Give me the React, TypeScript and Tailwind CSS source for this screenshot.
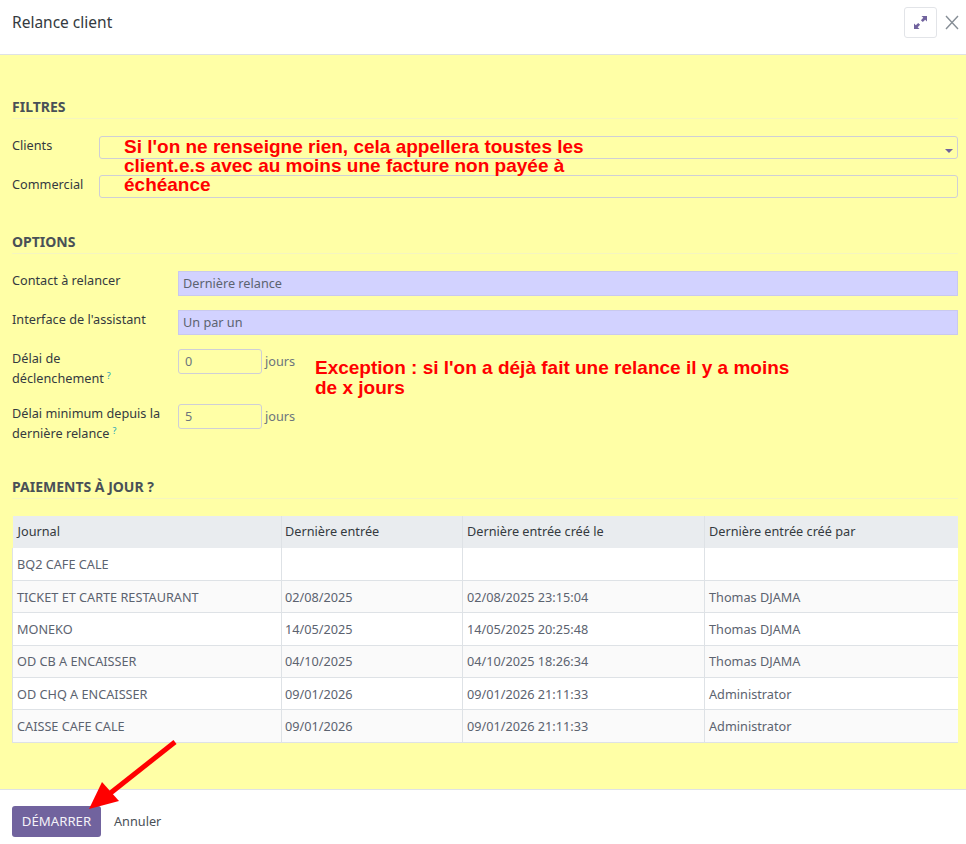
const rows = [
  ["BQ2 CAFE CALE", "", "", ""],
  ["TICKET ET CARTE RESTAURANT", "02/08/2025", "02/08/2025 23:15:04", "Thomas DJAMA"],
  ["MONEKO", "14/05/2025", "14/05/2025 20:25:48", "Thomas DJAMA"],
  ["OD CB A ENCAISSER", "04/10/2025", "04/10/2025 18:26:34", "Thomas DJAMA"],
  ["OD CHQ A ENCAISSER", "09/01/2026", "09/01/2026 21:11:33", "Administrator"],
  ["CAISSE CAFE CALE", "09/01/2026", "09/01/2026 21:11:33", "Administrator"],
];

function SectionTitle({ children }: { children: string }) {
  return (
    <h2 className="h-[23px] border-b border-[#f5f5c0] text-[14px] leading-[21px] font-bold text-[#495057]">
      {children}
    </h2>
  );
}

function Help() {
  return <sup className="ml-[3px] text-[9px] leading-none text-[#17a2b8]">?</sup>;
}

function NumberField({ value }: { value: string }) {
  return (
    <div className="flex items-start">
      <div className="h-[25px] w-[84px] rounded-[3px] border border-[#cfcfd6] pl-[6px] text-[12.7px] leading-[23px] text-[#6c757d]">
        {value}
      </div>
      <span className="ml-[3px] mt-[2px] text-[12.7px] leading-[20px] text-[#6c757d]">jours</span>
    </div>
  );
}

export default function App() {
  return (
    <div className="relative flex h-[844px] w-[966px] flex-col overflow-hidden bg-white font-['Noto_Sans',sans-serif] text-[12.7px] text-[#343a40]">
      <header className="flex h-[55px] shrink-0 items-start border-b border-[#dee2e6] pl-[12px] pr-[7px]">
        <h1 className="mt-[12px] text-[15.5px] leading-[20px] text-[#343a40]">Relance client</h1>
        <button className="ml-auto mt-[7px] grid h-[31px] w-[33px] place-items-center rounded-[3px] border border-[#e2e4e8] bg-white">
          <svg width="15" height="15" viewBox="0 0 15 15" fill="#71639e">
            <path d="M8.5 1H14v5.5l-1.8-1.8-2.4 2.4-1.9-1.9 2.4-2.4z" />
            <path d="M1 8.5V14h5.5l-1.8-1.8 2.4-2.4-1.9-1.9-2.4 2.4z" />
          </svg>
        </button>
        <button className="ml-[8px] mt-[15px]">
          <svg width="14" height="15" viewBox="0 0 14 15" stroke="#868e96" strokeWidth="1.4" fill="none">
            <path d="M1 1l12 13M13 1L1 14" />
          </svg>
        </button>
      </header>

      <main className="flex-1 bg-[#ffffa6] pl-[12px] pr-[8px] pt-[41px]">
        <SectionTitle>FILTRES</SectionTitle>
        <div className="mt-[17px] flex h-[23px] items-start">
          <label className="w-[87px] leading-[19px]">Clients</label>
          <div className="relative h-[23px] flex-1 rounded-[3px] border border-[#cfcfd6]">
            <span className="absolute right-[4px] top-[12px] h-0 w-0 border-x-[4px] border-t-[4px] border-x-transparent border-t-[#71639e]" />
          </div>
        </div>
        <div className="mt-[16px] flex h-[23px] items-start">
          <label className="w-[87px] leading-[19px]">Commercial</label>
          <div className="h-[23px] flex-1 rounded-[3px] border border-[#cfcfd6]" />
        </div>

        <div className="mt-[33px]">
          <SectionTitle>OPTIONS</SectionTitle>
        </div>
        <div className="mt-[17px] flex h-[25px] items-start">
          <label className="w-[166px] leading-[19px]">Contact à relancer</label>
          <div className="h-[25px] flex-1 border border-[#c9c9ee] bg-[#d2d2ff] pl-[4px] leading-[23px] text-[#5c6370]">
            Dernière relance
          </div>
        </div>
        <div className="mt-[14px] flex h-[25px] items-start">
          <label className="w-[166px] leading-[19px]">Interface de l'assistant</label>
          <div className="h-[25px] flex-1 border border-[#c9c9ee] bg-[#d2d2ff] pl-[4px] leading-[23px] text-[#5c6370]">
            Un par un
          </div>
        </div>
        <div className="mt-[14px] flex h-[40px] items-start">
          <label className="-mt-[1px] w-[166px] leading-[20px]">
            Délai de
            <br />
            déclenchement
            <Help />
          </label>
          <NumberField value="0" />
        </div>
        <div className="mt-[15px] flex h-[40px] items-start">
          <label className="-mt-[1px] w-[166px] leading-[20px]">
            Délai minimum depuis la
            <br />
            dernière relance
            <Help />
          </label>
          <NumberField value="5" />
        </div>

        <div className="mt-[32px]">
          <SectionTitle>PAIEMENTS À JOUR ?</SectionTitle>
        </div>
        <table className="mt-[17px] w-[945px] table-fixed border-collapse text-[12.7px] text-[#5c6370]">
          <colgroup>
            <col className="w-[269px]" />
            <col className="w-[181px]" />
            <col className="w-[242px]" />
            <col className="w-[253px]" />
          </colgroup>
          <thead>
            <tr className="h-[32px] bg-[#e9ecef] text-[#343a40]">
              <th className="border-r border-[#dee2e6] pl-[5px] text-left font-normal">Journal</th>
              <th className="border-r border-[#dee2e6] pl-[3px] text-left font-normal">Dernière entrée</th>
              <th className="border-r border-[#dee2e6] pl-[4px] text-left font-normal">Dernière entrée créé le</th>
              <th className="pl-[4px] text-left font-normal">Dernière entrée créé par</th>
            </tr>
          </thead>
          <tbody>
            {rows.map((r, i) => (
              <tr key={r[0]} className={i % 2 === 0 ? "h-[32.4px] bg-white" : "h-[32.4px] bg-[#fafafa]"}>
                <td className="border border-t-0 border-[#dee2e6] pl-[4px] pt-[1px]">{r[0]}</td>
                <td className="border border-t-0 border-[#dee2e6] pl-[3px] pt-[1px]">{r[1]}</td>
                <td className="border border-t-0 border-[#dee2e6] pl-[4px] pt-[1px]">{r[2]}</td>
                <td className="border border-x-0 border-t-0 border-[#dee2e6] pl-[4px] pt-[1px]">{r[3]}</td>
              </tr>
            ))}
          </tbody>
        </table>
      </main>

      <footer className="flex h-[55px] shrink-0 items-start border-t border-[#dee2e6] pl-[12px] pt-[16px]">
        <button className="h-[31px] w-[89px] rounded-[3px] bg-[#71639e] pt-[1px] text-[13.2px] text-[#f4f2f8]">DÉMARRER</button>
        <button className="ml-[13px] h-[31px] pt-[1px] text-[12.7px] text-[#495057]">Annuler</button>
      </footer>

      {/* red notes pasted on top of the screenshot */}
      <p className="absolute left-[124px] top-[137px] w-[490px] font-['Liberation_Sans',sans-serif] text-[19px] leading-[19px] font-bold text-[#ff0000]">
        Si l'on ne renseigne rien, cela appellera toustes les client.e.s avec au moins une facture non payée à échéance
      </p>
      <p className="absolute left-[315px] top-[358px] w-[490px] font-['Liberation_Sans',sans-serif] text-[19px] leading-[20px] font-bold text-[#ff0000]">
        Exception : si l'on a déjà fait une relance il y a moins de x jours
      </p>
      <svg className="absolute left-[80px] top-[735px]" width="105" height="80" viewBox="80 735 105 80">
        <path d="M175 742L108 795" stroke="#ff0000" strokeWidth="5" />
        <polygon points="89,809 102,782 119,801" fill="#ff0000" />
      </svg>
    </div>
  );
}
